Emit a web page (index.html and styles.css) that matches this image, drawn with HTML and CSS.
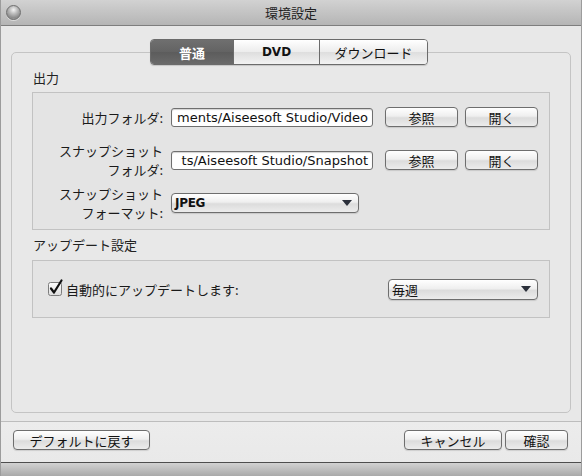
FILE: index.html
```html
<!DOCTYPE html>
<html lang="ja">
<head>
<meta charset="utf-8">
<title>環境設定</title>
<link rel="stylesheet" href="styles.css">
</head>
<body>
<div class="window">
  <div class="titlebar">
    <div class="tb-left"><span class="orb"></span></div>
    <div class="title">環境設定</div>
    <div class="tb-right"></div>
  </div>
  <div class="main">
    <div class="tabs">
      <div class="tab tab-sel t1">普通</div>
      <div class="tab t2 bold">DVD</div>
      <div class="tab t3">ダウンロード</div>
    </div>
    <div class="panel">
      <div class="sec-label">出力</div>
      <div class="group out">
        <div class="row">
          <div class="lbl">出力フォルダ:</div>
          <div class="field"><span>ments/Aiseesoft Studio/Video</span></div>
          <div class="btn b-ref">参照</div>
          <div class="btn b-open">開く</div>
        </div>
        <div class="row">
          <div class="lbl"><div class="ln">スナップショット</div><div class="ln">フォルダ:</div></div>
          <div class="field"><span>ts/Aiseesoft Studio/Snapshot</span></div>
          <div class="btn b-ref">参照</div>
          <div class="btn b-open">開く</div>
        </div>
        <div class="row">
          <div class="lbl"><div class="ln">スナップショット</div><div class="ln">フォーマット:</div></div>
          <div class="select sel-fmt"><span class="sel-text latin">JPEG</span><span class="arrow"></span></div>
        </div>
      </div>
      <div class="sec-label second">アップデート設定</div>
      <div class="group update">
        <svg class="check" width="16" height="16" viewBox="0 0 16 16">
          <defs>
            <linearGradient id="cg" x1="0" y1="0" x2="0" y2="1">
              <stop offset="0" stop-color="#ffffff"/>
              <stop offset="1" stop-color="#dcdcdc"/>
            </linearGradient>
          </defs>
          <rect x="1.5" y="2.5" width="13" height="13" rx="2" fill="url(#cg)" stroke="#7d7d7d"/>
          <path d="M4 8.5 L7 12.5 L14.5 0.5" fill="none" stroke="#111" stroke-width="2.2" stroke-linecap="round" stroke-linejoin="round"/>
        </svg>
        <div class="upd-text">自動的にアップデートします:</div>
        <div class="select sel-week"><span class="sel-text">毎週</span><span class="arrow"></span></div>
      </div>
    </div>
  </div>
  <div class="footer">
    <div class="btn b-default">デフォルトに戻す</div>
    <div class="spacer"></div>
    <div class="btn b-cancel">キャンセル</div>
    <div class="btn b-ok">確認</div>
  </div>
  <div class="bottombar"></div>
</div>
</body>
</html>
```

FILE: styles.css
```css
html, body {
  margin: 0;
  padding: 0;
}
body {
  width: 582px;
  height: 476px;
  overflow: hidden;
  font-family: "Noto Sans CJK JP", "DejaVu Sans", sans-serif;
  font-size: 13px;
  color: #1a1a1a;
}
.window {
  width: 582px;
  height: 476px;
  box-sizing: border-box;
  background: #e8e8e8;
  border-left: 1px solid #9c9c9c;
  border-right: 1px solid #9c9c9c;
  display: flex;
  flex-direction: column;
}
.titlebar {
  height: 25px;
  flex: none;
  border-bottom: 1px solid #7e7e7e;
  background: linear-gradient(#d2d2d2, #b5b5b5);
  display: grid;
  grid-template-columns: 1fr auto 1fr;
  align-items: center;
}
.tb-left {
  display: flex;
  align-items: center;
  padding-left: 5px;
}
.orb {
  width: 13px;
  height: 13px;
  border-radius: 50%;
  border: 1px solid #6f6f6f;
  background: radial-gradient(circle at 50% 30%, #f4f4f4 0, #bdbdbd 35%, #8c8c8c 70%, #a8a8a8 100%);
  box-shadow: 0 1px 0 rgba(255,255,255,0.5);
}
.title {
  font-size: 13px;
  color: #222;
  line-height: 16px;
}
.main {
  flex: none;
  padding: 13px 0 0 10px;
  display: flex;
  flex-direction: column;
}
.tabs {
  display: flex;
  margin-left: 139px;
  margin-bottom: -13px;
  position: relative;
  z-index: 1;
  width: 278px;
  height: 26px;
  box-sizing: border-box;
  border: 1px solid #6b6b6b;
  border-radius: 4px;
  overflow: hidden;
  box-shadow: 0 1px 1px rgba(0,0,0,0.15);
}
.tab {
  display: flex;
  align-items: center;
  justify-content: center;
  background: linear-gradient(#ffffff, #ececec 50%, #dedede 51%, #f2f2f2);
  font-size: 13px;
  color: #111;
}
.t1 { width: 82px; }
.t2 { width: 85px; border-left: 1px solid #6b6b6b; }
.t3 { flex: 1; border-left: 1px solid #6b6b6b; }
.bold { font-weight: bold; font-family: "DejaVu Sans", sans-serif; font-size: 12px; }
.tab-sel {
  background: linear-gradient(#6f6f6f, #636363 50%, #5c5c5c 51%, #6a6a6a);
  color: #fff;
  font-weight: bold;
}
.panel {
  width: 560px;
  height: 361px;
  box-sizing: border-box;
  border: 1px solid #c4c4c4;
  border-radius: 5px;
  padding: 11px 20px 0 20px;
  display: flex;
  flex-direction: column;
}
.sec-label {
  height: 28px;
  line-height: 28px;
  font-size: 13px;
  color: #222;
  padding-left: 1px;
}
.sec-label.second {
  height: 30px;
  line-height: 30px;
}
.group {
  border: 1px solid #c2c2c2;
  background: #e4e4e4;
}
.out {
  padding: 7px 0 9px 0;
  display: flex;
  flex-direction: column;
  gap: 9px;
}
.row {
  height: 34px;
  display: flex;
  align-items: center;
}
.lbl {
  width: 130px;
  margin-right: 8px;
  text-align: right;
  line-height: 19px;
  font-size: 13px;
  color: #1a1a1a;
}
.ln {
  height: 19px;
  line-height: 19px;
  white-space: nowrap;
}
.field {
  width: 202px;
  height: 19px;
  box-sizing: border-box;
  border: 1px solid #6f6f6f;
  border-radius: 3px;
  background: #fff;
  box-shadow: inset 0 1px 1px rgba(0,0,0,0.18);
  display: flex;
  align-items: center;
  justify-content: flex-end;
  overflow: hidden;
  white-space: nowrap;
  padding-right: 4px;
  font-family: "DejaVu Sans", sans-serif;
  font-size: 13px;
  color: #111;
}
.btn {
  height: 20px;
  box-sizing: border-box;
  border: 1px solid #6e6e6e;
  border-radius: 4px;
  background: linear-gradient(#ffffff, #efefef 45%, #dcdcdc 55%, #ececec);
  box-shadow: 0 1px 1px rgba(0,0,0,0.12);
  display: flex;
  align-items: center;
  justify-content: center;
  font-size: 13px;
  color: #111;
  white-space: nowrap;
}
.b-ref { width: 73px; margin-left: 12px; }
.b-open { width: 73px; margin-left: 7px; }
.select {
  height: 20px;
  box-sizing: border-box;
  border: 1px solid #6e6e6e;
  border-radius: 4px;
  background: linear-gradient(#ffffff, #efefef 45%, #dcdcdc 55%, #ececec);
  box-shadow: 0 1px 1px rgba(0,0,0,0.12);
  display: flex;
  align-items: center;
  padding: 0 6px 0 3px;
}
.sel-text {
  flex: 1;
  font-size: 13px;
  color: #111;
}
.latin {
  font-family: "DejaVu Sans", sans-serif;
  font-size: 12px;
  font-weight: bold;
  letter-spacing: -0.3px;
}
.arrow {
  width: 0;
  height: 0;
  border-left: 5px solid transparent;
  border-right: 5px solid transparent;
  border-top: 6px solid #2a2f3a;
}
.sel-fmt { width: 188px; }
.update {
  padding: 18px 11px 18px 14px;
  display: flex;
  align-items: center;
  height: 20px;
}
.check {
  flex: none;
  overflow: visible;
  margin-top: -2px;
}
.upd-text {
  margin-left: 3px;
  font-size: 13px;
  color: #1a1a1a;
}
.sel-week {
  width: 150px;
  margin-left: auto;
  height: 21px;
}
.footer {
  flex: none;
  margin-top: 8px;
  border-top: 1px solid #bdbdbd;
  padding: 8px 13px 12px 12px;
  display: flex;
  background: linear-gradient(#ececec, #e9e9e9);
}
.spacer { flex: 1; }
.b-default { width: 137px; }
.b-cancel { width: 98px; }
.b-ok { width: 63px; margin-left: 3px; }
.bottombar {
  flex: 1;
  border-top: 1px solid #4e4e4e;
  background: linear-gradient(#d2d2d2, #a9a9a9);
}
```
